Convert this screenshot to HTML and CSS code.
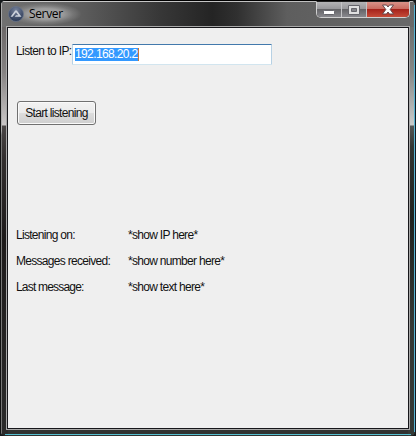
FILE: index.html
```html
<!DOCTYPE html>
<html lang="en">
<head>
<meta charset="utf-8">
<title>Server</title>
<link rel="stylesheet" href="styles.css">
</head>
<body>
<div class="window">
  <header class="titlebar">
    <svg class="app-icon" width="16" height="16" viewBox="0 0 16 16">
      <defs><radialGradient id="disc" cx=".5" cy=".25" r=".75"><stop offset="0" stop-color="#77839c"/><stop offset=".6" stop-color="#46536f"/><stop offset="1" stop-color="#283854"/></radialGradient></defs>
      <circle cx="8" cy="8" r="7.500" fill="url(#disc)" stroke="#68738a" stroke-width=".8"/>
      <path d="M2.500 10.700 L7 4.700 Q8 3.600 9 4.700 L13.500 10.700 H6.800 L8 9.200 H10.300 L8 6.200 L4.600 10.700Z" fill="#ccd2dc"/>
    </svg>
    <h1 class="title">Server</h1>
    <div class="controls">
      <button class="control" aria-label="Minimize"><svg width="24" height="15" viewBox="0 0 24 15"><rect x="6.500" y="8.500" width="11" height="4" rx=".8" fill="#fff" stroke="#66666c"/></svg></button>
      <button class="control" aria-label="Maximize"><svg width="24" height="15" viewBox="0 0 24 15"><path d="M6.500 3.500h11v9h-11z" fill="#e0e0e0" stroke="#66666c"/><path d="M9.500 6.500h5v3h-5z" fill="#85858a" stroke="#66666c"/></svg></button>
      <button class="control close" aria-label="Close"><svg width="42" height="15" viewBox="0 0 42 15"><path d="M15.500 3h4l1.500 2 1.500-2h4l-3.300 4.500 3.300 4.500h-4L21 10l-1.500 2h-4l3.300-4.500z" fill="#fff" stroke="#64464b"/></svg></button>
    </div>
  </header>
  <main class="client">
    <div class="address">
      <label class="address-label" for="ip">Listen to IP:</label>
      <div class="field" id="ip"><span class="selection">192.168.20.2</span></div>
    </div>
    <button class="start"><span>Start listening</span></button>
    <dl class="status">
      <dt>Listening on:</dt><dd>*show IP here*</dd>
      <dt>Messages received:</dt><dd>*show number here*</dd>
      <dt class="last">Last message:</dt><dd>*show text here*</dd>
    </dl>
  </main>
</div>
</body>
</html>
```
FILE: styles.css
```css
* { box-sizing: border-box; }
body {
  margin: 0;
  width: 416px;
  height: 436px;
  overflow: hidden;
  background: #15191b;
  font: 12px/14px "Liberation Sans", Arial, sans-serif;
  color: #111;
}
button { margin: 0; padding: 0; font: inherit; color: inherit; }
.window {
  width: 416px;
  height: 436px;
  padding: 1px 6px 6px;
  border-radius: 7px 7px 6px 6px;
  background:
    linear-gradient(#000, #000) 0 0 / 416px 1px no-repeat,
    linear-gradient(90deg, #ccc, #bbb) 0 1px / 416px 1px no-repeat,
    linear-gradient(#111, #111) 0 0 / 1px 436px no-repeat,
    linear-gradient(#aaa, #aaa 30%, #777 31%, #777) 1px 0 / 1px 436px no-repeat,
    linear-gradient(#101820, #101820) 415px 0 / 1px 436px no-repeat,
    linear-gradient(#58b5d3, #58b5d3) 414px 5px / 1px 427px no-repeat,
    linear-gradient(#55bfd0, #55bfd0) 5px 434px / 406px 1px no-repeat,
    linear-gradient(90deg, #717171, #606060 18%, #383838 38%, #242424 51%, #303030 57%, #5e5e5e 69%, #696969) 0 0 / 416px 27px no-repeat,
    linear-gradient(#6c6868, #858282 45px, #c9c6c6 98px, #4a4646 99px, #332f2f 130px, #1e1b1b 210px, #2b2b2b 409px) 0 27px / 8px 409px no-repeat,
    linear-gradient(#6c6f6e, #858886 45px, #c9cccb 98px, #535655 99px, #313633 120px, #1e221f 190px, #343936 300px) 408px 27px / 8px 409px no-repeat,
    #303231;
}
.titlebar {
  display: flex;
  height: 25px;
  padding-left: 2px;
}
.app-icon { margin-top: 5px; }
.title {
  margin: 2px 0 0 -7px;
  padding: 0 18px 0 12px;
  height: 22px;
  font: 12px/22px "Open Sans", "Noto Sans", sans-serif;
  color: #000;
  letter-spacing: -.35px;
  background: radial-gradient(ellipse at 44% 50%, #aaa 0, #a8a8a8d0 35%, #99999960 55%, transparent 72%);
}
.app-icon { position: relative; z-index: 1; }
.controls {
  display: flex;
  width: 94px;
  height: 17px;
  margin: 0 0 0 auto;
  border: 1px solid #d0d0d0;
  border-top-color: #222;
  border-radius: 0 0 5px 5px;
  overflow: hidden;
  background: #333;
}
.control {
  width: 25px;
  height: 15px;
  border: 0;
  border-right: 1px solid #c4c4c6;
  background: linear-gradient(#b4b4b6, #98989b 45%, #656568 50%, #88888d);
}
.control svg { display: block; }
.close {
  width: 42px;
  border: 0;
  background: linear-gradient(#d99389, #c96b60 45%, #a6231b 50%, #c54b38);
}
.client {
  width: 404px;
  height: 404px;
  border: 1px solid #a9a9a9;
  outline: 1px solid #16161a;
  outline-offset: -2px;
  padding: 17px 9px;
  background: #efefef;
}
.address { display: flex; height: 21px; }
.address-label { width: 56px; letter-spacing: -.6px; white-space: nowrap; }
.field {
  width: 200px;
  height: 21px;
  padding: 3px 2px;
  border: 1px solid #b7d1e4;
  border-top-color: #4279ac;
  border-bottom-color: #d2e5ef;
  border-radius: 1px;
  background: #fff;
}
.selection {
  display: block;
  width: 64px;
  height: 13px;
  line-height: 13px;
  border-right: 1px solid #c77838;
  background: #3399ff;
  color: #fff;
  letter-spacing: -.62px;
  white-space: nowrap;
}
.start {
  display: block;
  width: 79px;
  height: 24px;
  margin: 36px 0 0 1px;
  border: 1px solid #707070;
  border-radius: 3px;
  box-shadow: inset 0 0 0 1px #fafafa;
  background: linear-gradient(#f2f2f2, #ebebeb 48%, #dcdcdc 52%, #cfcfcf);
  letter-spacing: -.68px;
}
.status {
  display: grid;
  grid-template-columns: 112px 1fr;
  grid-auto-rows: 26px;
  margin: 103px 0 0;
  letter-spacing: -.7px;
}
.status dd { margin: 0; }
.last { letter-spacing: -.8px; }
```
